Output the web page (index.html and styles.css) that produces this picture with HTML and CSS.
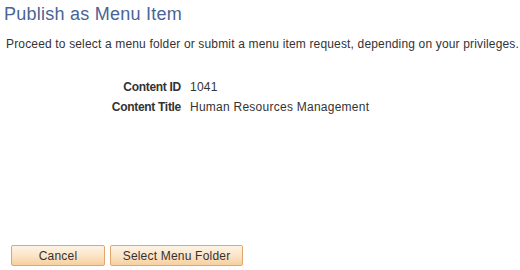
FILE: index.html
```html
<!DOCTYPE html>
<html lang="en">
<head>
    <meta charset="UTF-8">
    <title>Publish as Menu Item</title>
    <link rel="stylesheet" href="styles.css">
</head>
<body>
    <div class="page">
        <h1 class="title">Publish as Menu Item</h1>
        <p class="intro">Proceed to select a menu folder or submit a menu item request, depending on your privileges.</p>

        <div class="fields">
            <div class="label">Content ID</div>
            <div class="value">1041</div>
            <div class="label">Content Title</div>
            <div class="value">Human Resources Management</div>
        </div>

        <div class="buttons">
            <button class="btn btn-cancel">Cancel</button>
            <button class="btn btn-select">Select Menu Folder</button>
        </div>
    </div>
</body>
</html>
```

FILE: styles.css
```css
body {
    margin: 0;
    padding: 0;
    font-family: Arial, "Liberation Sans", sans-serif;
    background: #fff;
    color: #333;
}

.page {
    width: 520px;
    height: 270px;
    display: flex;
    flex-direction: column;
}

.title {
    margin: 3px 0 0 4px;
    font-size: 18px;
    font-weight: normal;
    letter-spacing: 0.25px;
    color: #4a6496;
    line-height: 22px;
}

.intro {
    margin: 12px 0 0 6px;
    font-size: 12px;
    letter-spacing: 0.16px;
    line-height: 14px;
    color: #333;
}

.fields {
    display: grid;
    grid-template-columns: 181px auto;
    column-gap: 9px;
    row-gap: 6px;
    margin-top: 29px;
    font-size: 12px;
    letter-spacing: 0.25px;
    line-height: 14px;
}

.label {
    text-align: right;
    font-weight: bold;
    letter-spacing: -0.3px;
    color: #333;
}

.value {
    color: #333;
}

.buttons {
    margin-top: auto;
    margin-bottom: 4px;
    margin-left: 11px;
    display: flex;
    gap: 5px;
}

.btn {
    font-family: Arial, "Liberation Sans", sans-serif;
    font-size: 12px;
    letter-spacing: 0.2px;
    color: #333;
    height: 21px;
    padding: 0 10px;
    border: 1px solid #e0a76c;
    border-radius: 2px;
    background: linear-gradient(to bottom, #fdf4e6 0%, #fbe3c4 55%, #f6cf9f 100%);
    cursor: pointer;
}

.btn-cancel {
    width: 94px;
}

.btn-select {
    width: 133px;
}
```
